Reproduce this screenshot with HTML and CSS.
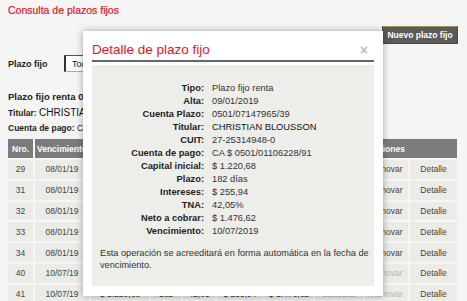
FILE: index.html
```html
<!DOCTYPE html>
<html lang="es">

<head>
    <meta charset="UTF-8">
    <meta name="viewport" content="width=device-width, initial-scale=1.0">
    <title>Consulta de plazos fijos</title>

    <link rel="stylesheet" href="styles.css">
</head>

<body>
    <div class="page">
        <h1 class="title">Consulta de plazos fijos</h1>

        <div class="toolbar">
            <button class="btn-new" type="button">Nuevo plazo fijo</button>
        </div>

        <div class="filter">
            <label for="tipo">Plazo fijo</label>
            <select id="tipo" class="filter-select">
                <option>Todos</option>
            </select>
        </div>

        <h2 class="pf-name">Plazo fijo renta 0501/07147965/39</h2>
        <p class="meta"><b>Titular:</b> <span class="meta-big">CHRISTIAN BLOUSSON</span></p>
        <p class="meta"><b>Cuenta de pago:</b> CA $ 0501/01106228/91</p>

        <table class="grid">
            <colgroup>
                <col style="width:25px">
                <col style="width:54px">
                <col style="width:58px">
                <col style="width:30px">
                <col style="width:32px">
                <col style="width:46px">
                <col style="width:48px">
                <col style="width:48px">
                <col style="width:43px">
                <col style="width:47px">
            </colgroup>
            <thead>
                <tr>
                    <th>Nro.</th>
                    <th>Vencimiento</th>
                    <th>Capital</th>
                    <th>Plazo</th>
                    <th>TNA</th>
                    <th>Intereses</th>
                    <th>Neto</th>
                    <th colspan="3">Acciones</th>
                </tr>
            </thead>
            <tbody>
                <tr>
                    <td>29</td><td>08/01/19</td><td>$ 1.220,68</td><td>182</td><td>42,05</td><td>$ 255,94</td><td>$ 1.476,62</td>
                    <td>Cancelar</td><td>Renovar</td><td>Detalle</td>
                </tr>
                <tr>
                    <td>31</td><td>08/01/19</td><td>$ 1.220,68</td><td>182</td><td>42,05</td><td>$ 255,94</td><td>$ 1.476,62</td>
                    <td>Cancelar</td><td>Renovar</td><td>Detalle</td>
                </tr>
                <tr>
                    <td>32</td><td>08/01/19</td><td>$ 1.220,68</td><td>182</td><td>42,05</td><td>$ 255,94</td><td>$ 1.476,62</td>
                    <td>Cancelar</td><td>Renovar</td><td>Detalle</td>
                </tr>
                <tr>
                    <td>33</td><td>08/01/19</td><td>$ 1.220,68</td><td>182</td><td>42,05</td><td>$ 255,94</td><td>$ 1.476,62</td>
                    <td>Cancelar</td><td>Renovar</td><td>Detalle</td>
                </tr>
                <tr>
                    <td>34</td><td>08/01/19</td><td>$ 1.220,68</td><td>182</td><td>42,05</td><td>$ 255,94</td><td>$ 1.476,62</td>
                    <td>Cancelar</td><td>Renovar</td><td>Detalle</td>
                </tr>
                <tr>
                    <td>40</td><td>10/07/19</td><td>$ 1.220,68</td><td>182</td><td>42,05</td><td>$ 255,94</td><td>$ 1.476,62</td>
                    <td class="off">Cancelar</td><td class="off">Renovar</td><td>Detalle</td>
                </tr>
                <tr>
                    <td>41</td><td>10/07/19</td><td>$ 1.220,68</td><td>182</td><td>42,05</td><td>$ 255,94</td><td>$ 1.476,62</td>
                    <td class="off">Cancelar</td><td class="off">Renovar</td><td>Detalle</td>
                </tr>
            </tbody>
        </table>
    </div>

    <div class="modal">
        <div class="modal-head">
            <span class="modal-title">Detalle de plazo fijo</span>
            <span class="modal-close">&times;</span>
        </div>
        <div class="modal-body">
            <dl class="details">
                <dt>Tipo:</dt><dd>Plazo fijo renta</dd>
                <dt>Alta:</dt><dd>09/01/2019</dd>
                <dt>Cuenta Plazo:</dt><dd>0501/07147965/39</dd>
                <dt>Titular:</dt><dd class="strong">CHRISTIAN BLOUSSON</dd>
                <dt>CUIT:</dt><dd>27-25314948-0</dd>
                <dt>Cuenta de pago:</dt><dd>CA $ 0501/01106228/91</dd>
                <dt>Capital inicial:</dt><dd>$ 1.220,68</dd>
                <dt>Plazo:</dt><dd>182 días</dd>
                <dt>Intereses:</dt><dd>$ 255,94</dd>
                <dt>TNA:</dt><dd>42,05%</dd>
                <dt>Neto a cobrar:</dt><dd>$ 1.476,62</dd>
                <dt>Vencimiento:</dt><dd>10/07/2019</dd>
            </dl>
            <p class="note">Esta operación se acreeditará en forma automática en la fecha de vencimiento.</p>
        </div>
    </div>
</body>

</html>
```

FILE: styles.css
```css
body {
    margin: 0;
    background-color: #f5f5f5;
    font-family: "Liberation Sans", Arial, sans-serif;
    color: #333;
    overflow: hidden;
}

.page {
    padding: 4px 9px 0 8px;
}

.title {
    margin: 0;
    font-size: 10.5px;
    line-height: 12px;
    font-weight: normal;
    color: #e2161f;
    -webkit-text-stroke: 0.2px #e2161f;
}

.toolbar {
    display: flex;
    justify-content: flex-end;
    margin-top: 10px;
}

.btn-new {
    height: 18px;
    width: 76px;
    padding: 0;
    background-color: #5a5a5a;
    color: white;
    border: 1px solid #4a4a4a;
    border-top-color: #a08c5a;
    font-family: inherit;
    font-size: 8.5px;
    font-weight: bold;
}

.filter {
    display: flex;
    align-items: center;
    margin-top: 11px;
    height: 17px;
}

.filter label {
    width: 56px;
    font-size: 9px;
    font-weight: bold;
    color: #222;
}

.filter-select {
    height: 17px;
    width: 130px;
    padding: 0 2px;
    border: 1px solid #aaa;
    border-left: 2px solid #333;
    border-top-color: #555;
    background: white;
    font-family: inherit;
    font-size: 9px;
    color: #222;
}

.pf-name {
    margin: 19px 0 0 0;
    font-size: 9.5px;
    line-height: 12px;
    color: #222;
}

.meta {
    margin: 3px 0 0 0;
    font-size: 8.5px;
    line-height: 13px;
    color: #222;
}

.meta + .meta {
    margin-top: 2px;
}

.meta-big {
    font-size: 10px;
    color: #111;
}

.grid {
    margin: 2px 0 0 -2px;
    border-collapse: separate;
    border-spacing: 2px;
    table-layout: fixed;
    width: 453px;
    font-size: 8.5px;
}

.grid th {
    height: 19px;
    padding: 0;
    background-color: #7b7b7b;
    color: white;
    font-weight: bold;
    white-space: nowrap;
    overflow: hidden;
}

.grid td {
    height: 18.8px;
    padding: 0;
    background-color: #ebebe7;
    color: #444;
    text-align: center;
    white-space: nowrap;
    overflow: hidden;
}

.grid td.off {
    color: #b5b5b5;
}

/* modal window over the page */
.modal {
    position: absolute;
    left: 83px;
    top: 31px;
    width: 300px;
    height: 265px;
    box-sizing: border-box;
    padding: 0 9px 10px 9px;
    background-color: white;
    box-shadow: 0 0 7px rgba(0, 0, 0, 0.35);
    display: flex;
    flex-direction: column;
}

.modal-head {
    display: flex;
    justify-content: space-between;
    align-items: center;
    padding-top: 11px;
    padding-bottom: 2px;
    border-bottom: 2px solid #666;
}

.modal-title {
    font-size: 13.5px;
    line-height: 16px;
    color: #e2161f;
}

.modal-close {
    margin-right: 6px;
    font-size: 14px;
    font-weight: bold;
    line-height: 16px;
    color: #c0c0c0;
}

.modal-body {
    flex: 1;
    margin-top: 3px;
    padding: 17px 3px 0 8px;
    background-color: #edede9;
}

.details {
    display: grid;
    grid-template-columns: 104px 1fr;
    column-gap: 8px;
    margin: 0;
    font-size: 9.3px;
    line-height: 13px;
}

.details dt {
    text-align: right;
    font-weight: bold;
    color: #222;
}

.details dd {
    margin: 0;
    color: #333;
}

.details dd.strong {
    color: #111;
}

.note {
    margin: 9px 0 0 0;
    font-size: 9.2px;
    line-height: 12px;
    color: #333;
}
```
